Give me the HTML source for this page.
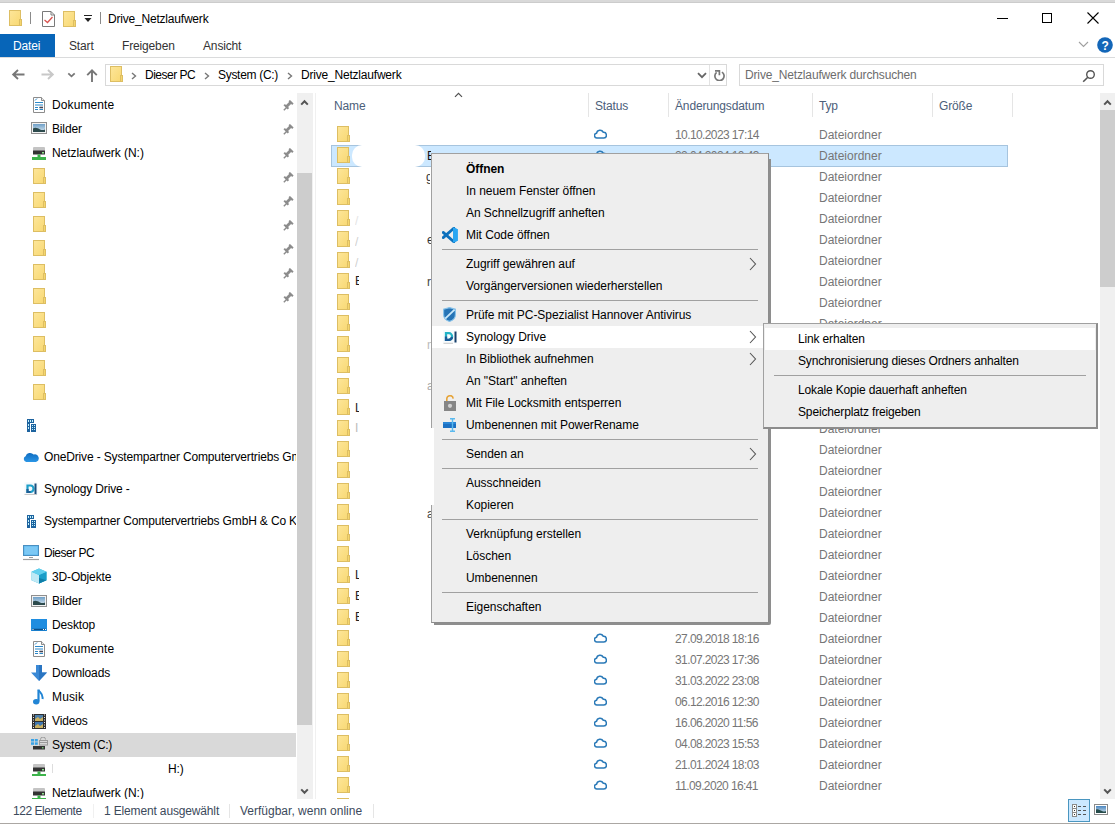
<!DOCTYPE html>
<html><head><meta charset="utf-8"><style>
*{margin:0;padding:0;box-sizing:border-box}
html,body{width:1115px;height:824px;overflow:hidden;background:#fff}
body{position:relative;font-family:"Liberation Sans",sans-serif;font-size:12px;color:#000;letter-spacing:-0.15px}
.a{position:absolute}
.t{position:absolute;white-space:nowrap;line-height:20px}
.d{position:absolute;left:675px;color:#767676;letter-spacing:-0.6px;line-height:21px;white-space:nowrap}
.ty{position:absolute;left:819px;color:#767676;letter-spacing:0;line-height:21px;white-space:nowrap}
.nv{position:absolute;line-height:24px;white-space:nowrap;color:#000}
.mi{position:absolute;left:466px;line-height:22px;white-space:nowrap;color:#000;letter-spacing:-0.05px}
.sep{position:absolute;height:1px;background:#a0a0a0}
</style></head><body>
<svg width="0" height="0" style="position:absolute"><defs><linearGradient id="fg" x1="0" y1="0" x2="1" y2="1"><stop offset="0" stop-color="#FDE69A"/><stop offset="1" stop-color="#F8D872"/></linearGradient></defs></svg>

<div class="a" style="left:0;top:0;width:1115px;height:3px;background:#d9d9d9;border-bottom:1px solid #cccccc"></div>
<svg class="a" style="left:9px;top:10px" width="13" height="16" viewBox="0 0 13 16"><rect x="0.5" y="0.5" width="11" height="15" fill="url(#fg)" stroke="#DDBE63"/><rect x="10.5" y="9.5" width="2" height="6" fill="#F5D66E" stroke="#DDBE63"/></svg>
<div class="a" style="left:30px;top:12px;width:1px;height:12px;background:#8a8a8a"></div>
<svg class="a" style="left:42px;top:11px" width="13" height="16" viewBox="0 0 13 16"><path d="M0.5 0.5H9L12.5 4V15.5H0.5Z" fill="#fff" stroke="#7a7a7a"/><path d="M9 0.5V4H12.5" fill="none" stroke="#7a7a7a"/><path d="M2.5 9L5.5 11.5L10.5 6" fill="none" stroke="#d9534f" stroke-width="1.3"/></svg>
<svg class="a" style="left:63px;top:11px" width="13" height="16" viewBox="0 0 13 16"><rect x="0.5" y="0.5" width="11" height="15" fill="url(#fg)" stroke="#DDBE63"/><rect x="10.5" y="9.5" width="2" height="6" fill="#F5D66E" stroke="#DDBE63"/></svg>
<svg class="a" style="left:83px;top:14px" width="10" height="10" viewBox="0 0 10 10"><rect x="1" y="1" width="8" height="1" fill="#222"/><path d="M1.5 4H8.5L5 8Z" fill="#222"/></svg>
<div class="a" style="left:100px;top:12px;width:1px;height:12px;background:#8a8a8a"></div>
<div class="t" style="left:108px;top:9px;letter-spacing:-0.2px">Drive_Netzlaufwerk</div>
<div class="a" style="left:997px;top:18px;width:11px;height:1px;background:#000"></div>
<div class="a" style="left:1042px;top:13px;width:10px;height:10px;border:1px solid #000"></div>
<svg class="a" style="left:1087px;top:12px" width="12" height="12" viewBox="0 0 12 12"><path d="M0.5 0.5L11.5 11.5M11.5 0.5L0.5 11.5" stroke="#000" stroke-width="1.1"/></svg>
<div class="a" style="left:0;top:34px;width:55px;height:23px;background:#0765b8"></div>
<div class="t" style="left:13px;top:36px;color:#fff">Datei</div>
<div class="t" style="left:69px;top:36px;color:#333">Start</div>
<div class="t" style="left:122px;top:36px;color:#333">Freigeben</div>
<div class="t" style="left:203px;top:36px;color:#333">Ansicht</div>
<div class="a" style="left:0;top:57px;width:1115px;height:1px;background:#dadbdc"></div>
<svg class="a" style="left:1078px;top:41px" width="11" height="7" viewBox="0 0 11 7"><path d="M1 1L5.5 5.5L10 1" fill="none" stroke="#a0a0a0" stroke-width="1.1"/></svg>
<svg class="a" style="left:1097px;top:37px" width="16" height="16" viewBox="0 0 16 16"><circle cx="8" cy="8" r="7.8" fill="#1366b8"/><text x="8" y="12.5" font-family="Liberation Sans" font-weight="bold" font-size="12" fill="#fff" text-anchor="middle">?</text></svg>
<svg class="a" style="left:11px;top:69px" width="14" height="12" viewBox="0 0 14 12"><path d="M13.5 5.5H2.5M7 1L2.2 5.5L7 10" fill="none" stroke="#777" stroke-width="1.9"/></svg>
<svg class="a" style="left:41px;top:69px" width="14" height="12" viewBox="0 0 14 12"><path d="M0.5 5.5H11.5M7 1L11.8 5.5L7 10" fill="none" stroke="#c8c8c8" stroke-width="1.9"/></svg>
<svg class="a" style="left:67px;top:72px" width="9" height="6" viewBox="0 0 9 6"><path d="M1.3 1.3L4.5 4.3L7.7 1.3" fill="none" stroke="#777" stroke-width="1.8"/></svg>
<svg class="a" style="left:86px;top:69px" width="12" height="13" viewBox="0 0 12 13"><path d="M6 13V1.5M1.2 6.2L6 1.4L10.8 6.2" fill="none" stroke="#777" stroke-width="1.9"/></svg>
<div class="a" style="left:105px;top:64px;width:622px;height:22px;border:1px solid #d9d9d9"></div>
<div class="a" style="left:709px;top:65px;width:1px;height:20px;background:#e3e3e3"></div>
<svg class="a" style="left:110px;top:66px" width="13" height="16" viewBox="0 0 13 16"><rect x="0.5" y="0.5" width="11" height="15" fill="url(#fg)" stroke="#DDBE63"/><rect x="10.5" y="9.5" width="2" height="6" fill="#F5D66E" stroke="#DDBE63"/></svg>
<svg class="a" style="left:131px;top:72px" width="6" height="8" viewBox="0 0 6 8"><path d="M1 1L4.5 4.0L1 7" fill="none" stroke="#777" stroke-width="1.4"/></svg>
<svg class="a" style="left:204px;top:72px" width="6" height="8" viewBox="0 0 6 8"><path d="M1 1L4.5 4.0L1 7" fill="none" stroke="#777" stroke-width="1.4"/></svg>
<svg class="a" style="left:287px;top:72px" width="6" height="8" viewBox="0 0 6 8"><path d="M1 1L4.5 4.0L1 7" fill="none" stroke="#777" stroke-width="1.4"/></svg>
<div class="t" style="left:145px;top:65px;letter-spacing:-0.5px">Dieser PC</div>
<div class="t" style="left:218px;top:65px;letter-spacing:-0.3px">System (C:)</div>
<div class="t" style="left:301px;top:65px;letter-spacing:-0.2px">Drive_Netzlaufwerk</div>
<svg class="a" style="left:697px;top:72px" width="10" height="7" viewBox="0 0 10 7"><path d="M1 1.2L5 5.2L9 1.2" fill="none" stroke="#666" stroke-width="1.8"/></svg>
<svg class="a" style="left:713px;top:69px" width="12" height="12" viewBox="0 0 12 12"><path d="M8.9 3.1A4.6 4.6 0 1 1 3.6 3.4" fill="none" stroke="#777" stroke-width="1.7"/><path d="M2 1.9H6.4V6.2" fill="none" stroke="#777" stroke-width="1.7"/></svg>
<div class="a" style="left:739px;top:64px;width:365px;height:22px;border:1px solid #d9d9d9"></div>
<div class="t" style="left:745px;top:65px;color:#6d6d6d">Drive_Netzlaufwerk durchsuchen</div>
<svg class="a" style="left:1082px;top:69px" width="14" height="14" viewBox="0 0 14 14"><circle cx="8.5" cy="5.5" r="3.8" fill="none" stroke="#555" stroke-width="1.4"/><path d="M5.8 8.2L1.2 12.8" stroke="#555" stroke-width="1.6"/></svg>
<div class="a" style="left:0;top:733px;width:296px;height:24px;background:#d9d9d9"></div>
<svg class="a" style="left:33px;top:97px" width="12" height="16" viewBox="0 0 12 16"><path d="M0.5 0.5H8.5L11.5 3.5V15.5H0.5Z" fill="#fff" stroke="#8c8c8c"/><path d="M8.5 0.5V3.5H11.5" fill="#e8e8e8" stroke="#8c8c8c"/><path d="M2 3.5L4 1.5M2 5.5H10M2 8H10M2 10.5H5M6.5 10.5H10M2 12.5H5M6.5 12.5H10" stroke="#2b88c8" stroke-width="1"/><path d="M6.5 10.5H10" stroke="#445" stroke-width="1.6"/></svg>
<div class="nv" style="left:52px;top:93px;letter-spacing:0.1px">Dokumente</div>
<svg class="a" style="left:31px;top:122px" width="16" height="12" viewBox="0 0 16 12"><rect x="0.5" y="0.5" width="15" height="11" fill="#f2f2f2" stroke="#8f8f8f"/><defs><linearGradient id="sky" x1="0" y1="0" x2="0" y2="1"><stop offset="0" stop-color="#6fa0c8"/><stop offset="1" stop-color="#d8e6ef"/></linearGradient></defs><rect x="2" y="2" width="12" height="8" fill="url(#sky)"/><path d="M2 6.5C4 5 7 6 9 7.5C11 8.5 13 8 14 7.5V10H2Z" fill="#2c4a4c"/></svg>
<div class="nv" style="left:52px;top:117px">Bilder</div>
<svg class="a" style="left:32px;top:147px" width="14" height="13" viewBox="0 0 14 13"><rect x="1" y="0" width="12" height="4" rx="1" fill="#c4c4c4"/><rect x="1" y="3.5" width="12" height="4" fill="#333"/><rect x="10" y="5" width="2" height="1.5" fill="#8de08d"/><rect x="5.5" y="7.5" width="3" height="2.5" fill="#3cb34a"/><rect x="0" y="10" width="14" height="3" fill="#3cb34a"/></svg>
<div class="nv" style="left:52px;top:141px;letter-spacing:-0.05px">Netzlaufwerk (N:)</div>
<svg class="a" style="left:283px;top:100px" width="11" height="11" viewBox="0 0 11 11"><path d="M0.8 10.2L3.6 7.4" stroke="#8c8c8c" stroke-width="1.4"/><path d="M1.2 4.6L5.4 8.8" stroke="#8c8c8c" stroke-width="2"/><path d="M3.3 6.7L7.8 2.2" stroke="#8c8c8c" stroke-width="2.8"/><path d="M6.2 0.6L9.9 4.3" stroke="#8c8c8c" stroke-width="2"/></svg>
<svg class="a" style="left:283px;top:124px" width="11" height="11" viewBox="0 0 11 11"><path d="M0.8 10.2L3.6 7.4" stroke="#8c8c8c" stroke-width="1.4"/><path d="M1.2 4.6L5.4 8.8" stroke="#8c8c8c" stroke-width="2"/><path d="M3.3 6.7L7.8 2.2" stroke="#8c8c8c" stroke-width="2.8"/><path d="M6.2 0.6L9.9 4.3" stroke="#8c8c8c" stroke-width="2"/></svg>
<svg class="a" style="left:283px;top:148px" width="11" height="11" viewBox="0 0 11 11"><path d="M0.8 10.2L3.6 7.4" stroke="#8c8c8c" stroke-width="1.4"/><path d="M1.2 4.6L5.4 8.8" stroke="#8c8c8c" stroke-width="2"/><path d="M3.3 6.7L7.8 2.2" stroke="#8c8c8c" stroke-width="2.8"/><path d="M6.2 0.6L9.9 4.3" stroke="#8c8c8c" stroke-width="2"/></svg>
<svg class="a" style="left:283px;top:172px" width="11" height="11" viewBox="0 0 11 11"><path d="M0.8 10.2L3.6 7.4" stroke="#8c8c8c" stroke-width="1.4"/><path d="M1.2 4.6L5.4 8.8" stroke="#8c8c8c" stroke-width="2"/><path d="M3.3 6.7L7.8 2.2" stroke="#8c8c8c" stroke-width="2.8"/><path d="M6.2 0.6L9.9 4.3" stroke="#8c8c8c" stroke-width="2"/></svg>
<svg class="a" style="left:283px;top:196px" width="11" height="11" viewBox="0 0 11 11"><path d="M0.8 10.2L3.6 7.4" stroke="#8c8c8c" stroke-width="1.4"/><path d="M1.2 4.6L5.4 8.8" stroke="#8c8c8c" stroke-width="2"/><path d="M3.3 6.7L7.8 2.2" stroke="#8c8c8c" stroke-width="2.8"/><path d="M6.2 0.6L9.9 4.3" stroke="#8c8c8c" stroke-width="2"/></svg>
<svg class="a" style="left:283px;top:220px" width="11" height="11" viewBox="0 0 11 11"><path d="M0.8 10.2L3.6 7.4" stroke="#8c8c8c" stroke-width="1.4"/><path d="M1.2 4.6L5.4 8.8" stroke="#8c8c8c" stroke-width="2"/><path d="M3.3 6.7L7.8 2.2" stroke="#8c8c8c" stroke-width="2.8"/><path d="M6.2 0.6L9.9 4.3" stroke="#8c8c8c" stroke-width="2"/></svg>
<svg class="a" style="left:283px;top:244px" width="11" height="11" viewBox="0 0 11 11"><path d="M0.8 10.2L3.6 7.4" stroke="#8c8c8c" stroke-width="1.4"/><path d="M1.2 4.6L5.4 8.8" stroke="#8c8c8c" stroke-width="2"/><path d="M3.3 6.7L7.8 2.2" stroke="#8c8c8c" stroke-width="2.8"/><path d="M6.2 0.6L9.9 4.3" stroke="#8c8c8c" stroke-width="2"/></svg>
<svg class="a" style="left:283px;top:268px" width="11" height="11" viewBox="0 0 11 11"><path d="M0.8 10.2L3.6 7.4" stroke="#8c8c8c" stroke-width="1.4"/><path d="M1.2 4.6L5.4 8.8" stroke="#8c8c8c" stroke-width="2"/><path d="M3.3 6.7L7.8 2.2" stroke="#8c8c8c" stroke-width="2.8"/><path d="M6.2 0.6L9.9 4.3" stroke="#8c8c8c" stroke-width="2"/></svg>
<svg class="a" style="left:283px;top:292px" width="11" height="11" viewBox="0 0 11 11"><path d="M0.8 10.2L3.6 7.4" stroke="#8c8c8c" stroke-width="1.4"/><path d="M1.2 4.6L5.4 8.8" stroke="#8c8c8c" stroke-width="2"/><path d="M3.3 6.7L7.8 2.2" stroke="#8c8c8c" stroke-width="2.8"/><path d="M6.2 0.6L9.9 4.3" stroke="#8c8c8c" stroke-width="2"/></svg>
<svg class="a" style="left:33px;top:168px" width="13" height="16" viewBox="0 0 13 16"><rect x="0.5" y="0.5" width="11" height="15" fill="url(#fg)" stroke="#DDBE63"/><rect x="10.5" y="9.5" width="2" height="6" fill="#F5D66E" stroke="#DDBE63"/></svg>
<svg class="a" style="left:33px;top:192px" width="13" height="16" viewBox="0 0 13 16"><rect x="0.5" y="0.5" width="11" height="15" fill="url(#fg)" stroke="#DDBE63"/><rect x="10.5" y="9.5" width="2" height="6" fill="#F5D66E" stroke="#DDBE63"/></svg>
<svg class="a" style="left:33px;top:216px" width="13" height="16" viewBox="0 0 13 16"><rect x="0.5" y="0.5" width="11" height="15" fill="url(#fg)" stroke="#DDBE63"/><rect x="10.5" y="9.5" width="2" height="6" fill="#F5D66E" stroke="#DDBE63"/></svg>
<svg class="a" style="left:33px;top:240px" width="13" height="16" viewBox="0 0 13 16"><rect x="0.5" y="0.5" width="11" height="15" fill="url(#fg)" stroke="#DDBE63"/><rect x="10.5" y="9.5" width="2" height="6" fill="#F5D66E" stroke="#DDBE63"/></svg>
<svg class="a" style="left:33px;top:264px" width="13" height="16" viewBox="0 0 13 16"><rect x="0.5" y="0.5" width="11" height="15" fill="url(#fg)" stroke="#DDBE63"/><rect x="10.5" y="9.5" width="2" height="6" fill="#F5D66E" stroke="#DDBE63"/></svg>
<svg class="a" style="left:33px;top:288px" width="13" height="16" viewBox="0 0 13 16"><rect x="0.5" y="0.5" width="11" height="15" fill="url(#fg)" stroke="#DDBE63"/><rect x="10.5" y="9.5" width="2" height="6" fill="#F5D66E" stroke="#DDBE63"/></svg>
<svg class="a" style="left:33px;top:312px" width="13" height="16" viewBox="0 0 13 16"><rect x="0.5" y="0.5" width="11" height="15" fill="url(#fg)" stroke="#DDBE63"/><rect x="10.5" y="9.5" width="2" height="6" fill="#F5D66E" stroke="#DDBE63"/></svg>
<svg class="a" style="left:33px;top:336px" width="13" height="16" viewBox="0 0 13 16"><rect x="0.5" y="0.5" width="11" height="15" fill="url(#fg)" stroke="#DDBE63"/><rect x="10.5" y="9.5" width="2" height="6" fill="#F5D66E" stroke="#DDBE63"/></svg>
<svg class="a" style="left:33px;top:360px" width="13" height="16" viewBox="0 0 13 16"><rect x="0.5" y="0.5" width="11" height="15" fill="url(#fg)" stroke="#DDBE63"/><rect x="10.5" y="9.5" width="2" height="6" fill="#F5D66E" stroke="#DDBE63"/></svg>
<svg class="a" style="left:33px;top:384px" width="13" height="16" viewBox="0 0 13 16"><rect x="0.5" y="0.5" width="11" height="15" fill="url(#fg)" stroke="#DDBE63"/><rect x="10.5" y="9.5" width="2" height="6" fill="#F5D66E" stroke="#DDBE63"/></svg>
<svg class="a" style="left:27px;top:419px" width="10" height="13" viewBox="0 0 10 13"><path d="M0 0H7V4H3V13H0Z" fill="#1d639f"/><rect x="4" y="5" width="5" height="8" fill="#1d639f"/><g fill="#c4f1fb"><rect x="1" y="1" width="1" height="2"/><rect x="3" y="1" width="1" height="2"/><rect x="5" y="1" width="1" height="2"/><rect x="1" y="5" width="1" height="2"/><rect x="1" y="8" width="1" height="2"/><rect x="5" y="6" width="1" height="1"/><rect x="7" y="6" width="1" height="1"/><rect x="5" y="8" width="1" height="1"/><rect x="7" y="8" width="1" height="1"/><rect x="5" y="10" width="1" height="1"/><rect x="7" y="10" width="1" height="1"/></g></svg>
<svg class="a" style="left:23px;top:452px" width="16" height="10" viewBox="0 0 16 10"><defs><linearGradient id="od" x1="0" y1="0" x2="0" y2="1"><stop offset="0" stop-color="#0f6cc0"/><stop offset="1" stop-color="#2b96e6"/></linearGradient></defs><path d="M3.2 10A3 3 0 0 1 2.6 4.3A4.6 4.6 0 0 1 10.6 2.6A3.6 3.6 0 0 1 13 10Z" fill="url(#od)"/></svg>
<div class="nv" style="left:44px;top:445px;width:252px;overflow:hidden">OneDrive - Systempartner Computervertriebs GmbH &amp; Co KG</div>
<svg class="a" style="left:24px;top:482px" width="14" height="14" viewBox="0 0 14 14"><rect x="0.5" y="0.5" width="13" height="12.5" fill="#f4f8fb"/><path d="M0.5 12.5H13" stroke="#c8c8c8"/><path d="M3.5 3.5H6.5A3 3.2 0 0 1 6.5 10H3.5Z" fill="none" stroke="#1e9fc9" stroke-width="2.2"/><path d="M3.5 7V10H6.5" fill="none" stroke="#1d5f96" stroke-width="2.2"/><path d="M11.5 1.5V12" stroke="#1b4f7d" stroke-width="2"/></svg>
<div class="nv" style="left:44px;top:477px">Synology Drive -</div>
<svg class="a" style="left:27px;top:515px" width="10" height="13" viewBox="0 0 10 13"><path d="M0 0H7V4H3V13H0Z" fill="#1d639f"/><rect x="4" y="5" width="5" height="8" fill="#1d639f"/><g fill="#c4f1fb"><rect x="1" y="1" width="1" height="2"/><rect x="3" y="1" width="1" height="2"/><rect x="5" y="1" width="1" height="2"/><rect x="1" y="5" width="1" height="2"/><rect x="1" y="8" width="1" height="2"/><rect x="5" y="6" width="1" height="1"/><rect x="7" y="6" width="1" height="1"/><rect x="5" y="8" width="1" height="1"/><rect x="7" y="8" width="1" height="1"/><rect x="5" y="10" width="1" height="1"/><rect x="7" y="10" width="1" height="1"/></g></svg>
<div class="nv" style="left:44px;top:509px;width:252px;overflow:hidden">Systempartner Computervertriebs GmbH &amp; Co KG</div>
<svg class="a" style="left:23px;top:545px" width="16" height="16" viewBox="0 0 16 16"><rect x="0.5" y="0.5" width="15" height="10" fill="#5ab8f0" stroke="#4a8fc0"/><rect x="1.5" y="1.5" width="13" height="8" fill="#7cc8f4"/><path d="M6 12.5H10" stroke="#9a9a9a" stroke-width="1"/><path d="M0 14.5H16" stroke="#a0a0a0" stroke-width="1.2"/></svg>
<div class="nv" style="left:44px;top:541px;letter-spacing:-0.5px">Dieser PC</div>
<svg class="a" style="left:31px;top:568px" width="16" height="16" viewBox="0 0 16 16"><path d="M8 0.5L15.5 3.8V12.2L8 15.5L0.5 12.2V3.8Z" fill="#3cbde0"/><path d="M0.5 3.8L8 7V15.5L0.5 12.2Z" fill="#bfe9f5"/><path d="M8 7L15.5 3.8V12.2L8 15.5Z" fill="#1a9dc8"/><path d="M0.5 3.8L8 0.5L15.5 3.8L8 7Z" fill="#63d0ee"/><path d="M8 10L15.5 12.2L8 15.5Z" fill="#0f7ea8"/></svg>
<div class="nv" style="left:52px;top:565px">3D-Objekte</div>
<svg class="a" style="left:31px;top:595px" width="16" height="12" viewBox="0 0 16 12"><rect x="0.5" y="0.5" width="15" height="11" fill="#f2f2f2" stroke="#8f8f8f"/><defs><linearGradient id="sky" x1="0" y1="0" x2="0" y2="1"><stop offset="0" stop-color="#6fa0c8"/><stop offset="1" stop-color="#d8e6ef"/></linearGradient></defs><rect x="2" y="2" width="12" height="8" fill="url(#sky)"/><path d="M2 6.5C4 5 7 6 9 7.5C11 8.5 13 8 14 7.5V10H2Z" fill="#2c4a4c"/></svg>
<div class="nv" style="left:52px;top:589px">Bilder</div>
<svg class="a" style="left:31px;top:619px" width="16" height="12" viewBox="0 0 16 12"><rect x="0" y="0" width="16" height="12" fill="#1f8de0"/><path d="M1 10.5H15" stroke="#0b4f8a" stroke-width="1.5"/><rect x="1.5" y="10" width="1" height="1" fill="#fff"/><rect x="12" y="10" width="1" height="1" fill="#fff"/><rect x="14" y="10" width="1" height="1" fill="#fff"/></svg>
<div class="nv" style="left:52px;top:613px">Desktop</div>
<svg class="a" style="left:33px;top:641px" width="12" height="16" viewBox="0 0 12 16"><path d="M0.5 0.5H8.5L11.5 3.5V15.5H0.5Z" fill="#fff" stroke="#8c8c8c"/><path d="M8.5 0.5V3.5H11.5" fill="#e8e8e8" stroke="#8c8c8c"/><path d="M2 3.5L4 1.5M2 5.5H10M2 8H10M2 10.5H5M6.5 10.5H10M2 12.5H5M6.5 12.5H10" stroke="#2b88c8" stroke-width="1"/><path d="M6.5 10.5H10" stroke="#445" stroke-width="1.6"/></svg>
<div class="nv" style="left:52px;top:637px;letter-spacing:0.1px">Dokumente</div>
<svg class="a" style="left:31px;top:665px" width="16" height="16" viewBox="0 0 16 16"><path d="M5 0H11V7.5H16L8 16L0 7.5H5Z" fill="#3a89d6"/><path d="M8 0H11V7.5H16L8 16Z" fill="#2a75c2"/></svg>
<div class="nv" style="left:52px;top:661px">Downloads</div>
<svg class="a" style="left:33px;top:689px" width="11" height="16" viewBox="0 0 11 16"><path d="M5.5 0.5V12.5" stroke="#2185d5" stroke-width="2.2"/><ellipse cx="3.2" cy="12.8" rx="3.2" ry="2.7" fill="#2185d5"/><path d="M5.5 1C6.5 3.5 10.5 4.5 9.5 10" fill="none" stroke="#2185d5" stroke-width="2"/></svg>
<div class="nv" style="left:52px;top:685px;letter-spacing:0.15px">Musik</div>
<svg class="a" style="left:32px;top:714px" width="14" height="15" viewBox="0 0 14 15"><rect x="0" y="0" width="14" height="15" fill="#2e2e2e"/><rect x="3" y="1" width="8" height="6" fill="#4f7fa8"/><rect x="3" y="8" width="8" height="6" fill="#3f77b0"/><path d="M3 5L6 3L8 5L11 3V7H3Z" fill="#c9b060"/><path d="M3 12L6 10L8 12L11 10V14H3Z" fill="#c9b060"/><path d="M1.5 0.5V15M12.5 0.5V15" stroke="#e8e8e8" stroke-width="1" stroke-dasharray="1 1.5"/></svg>
<div class="nv" style="left:52px;top:709px">Videos</div>
<svg class="a" style="left:31px;top:737px" width="17" height="13" viewBox="0 0 17 13"><rect x="0" y="2" width="3" height="2.5" fill="#3aa3e6"/><rect x="3.8" y="2" width="3" height="2.5" fill="#3aa3e6"/><rect x="0" y="5.3" width="3" height="2.5" fill="#3aa3e6"/><rect x="3.8" y="5.3" width="3" height="2.5" fill="#3aa3e6"/><path d="M9.5 3.5V2.5A2.5 2.5 0 0 1 14.5 2.5" fill="none" stroke="#9a9a9a"/><rect x="8.5" y="3.5" width="8" height="4.5" fill="none" stroke="#9a9a9a"/><path d="M8.5 5.5H16.5" stroke="#9a9a9a"/><rect x="2" y="9" width="12" height="3.5" fill="#333"/><rect x="11" y="10.2" width="1.5" height="1.2" fill="#7ddc7d"/></svg>
<div class="nv" style="left:52px;top:733px;letter-spacing:-0.3px">System (C:)</div>
<svg class="a" style="left:32px;top:764px" width="14" height="13" viewBox="0 0 14 13"><rect x="1" y="0" width="12" height="4" rx="1" fill="#c4c4c4"/><rect x="1" y="3.5" width="12" height="4" fill="#333"/><rect x="10" y="5" width="2" height="1.5" fill="#8de08d"/><rect x="5.5" y="7.5" width="3" height="3" fill="#3cb34a"/><rect x="0" y="10" width="14" height="2" fill="#3cb34a"/></svg>
<div class="nv" style="left:168px;top:757px">H:)</div>
<div class="a" style="left:52px;top:764px;width:1px;height:9px;background:#ddd"></div>
<svg class="a" style="left:32px;top:788px" width="14" height="12" viewBox="0 0 14 12"><rect x="1" y="0" width="12" height="4" rx="1" fill="#c4c4c4"/><rect x="1" y="3.5" width="12" height="4" fill="#333"/><rect x="10" y="5" width="2" height="1.5" fill="#8de08d"/><rect x="5.5" y="7.5" width="3" height="3" fill="#3cb34a"/><rect x="0" y="10" width="14" height="2" fill="#3cb34a"/></svg>
<div class="nv" style="left:52px;top:781px;letter-spacing:-0.05px">Netzlaufwerk (N:)</div>
<div class="a" style="left:297px;top:93px;width:16px;height:706px;background:#f0f0f0"></div>
<div class="a" style="left:297px;top:173px;width:15px;height:552px;background:#cdcdcd"></div>
<svg class="a" style="left:300px;top:99px" width="9" height="7" viewBox="0 0 9 7"><path d="M1.2 5.6L4.5 2.2L7.8 5.6" fill="none" stroke="#555" stroke-width="2"/></svg>
<svg class="a" style="left:300px;top:788px" width="9" height="7" viewBox="0 0 9 7"><path d="M1.2 1.4L4.5 4.8L7.8 1.4" fill="none" stroke="#555" stroke-width="2"/></svg>
<div class="a" style="left:315px;top:93px;width:1px;height:706px;background:#f0f0f0"></div>
<div class="t" style="left:334px;top:96px;color:#4c607a">Name</div>
<svg class="a" style="left:454px;top:92px" width="9" height="6" viewBox="0 0 9 6"><path d="M1 4.8L4.5 1.3L8 4.8" fill="none" stroke="#505050" stroke-width="1.2"/></svg>
<div class="t" style="left:595px;top:96px;color:#4c607a">Status</div>
<div class="t" style="left:675px;top:96px;color:#4c607a">Änderungsdatum</div>
<div class="t" style="left:819px;top:96px;color:#4c607a">Typ</div>
<div class="t" style="left:939px;top:96px;color:#4c607a">Größe</div>
<div class="a" style="left:588px;top:93px;width:1px;height:24px;background:#e5e5e5"></div>
<div class="a" style="left:668px;top:93px;width:1px;height:24px;background:#e5e5e5"></div>
<div class="a" style="left:812px;top:93px;width:1px;height:24px;background:#e5e5e5"></div>
<div class="a" style="left:932px;top:93px;width:1px;height:24px;background:#e5e5e5"></div>
<div class="a" style="left:1012px;top:93px;width:1px;height:24px;background:#e5e5e5"></div>
<div class="a" style="left:331px;top:145px;width:677px;height:22px;background:#cce8ff;border:1px solid #a6c4de"></div>
<svg class="a" style="left:337px;top:798px" width="13" height="16" viewBox="0 0 13 16"><rect x="0.5" y="0.5" width="11" height="15" fill="url(#fg)" stroke="#DDBE63"/><rect x="10.5" y="9.5" width="2" height="6" fill="#F5D66E" stroke="#DDBE63"/></svg>
<svg class="a" style="left:337px;top:126px" width="13" height="16" viewBox="0 0 13 16"><rect x="0.5" y="0.5" width="11" height="15" fill="url(#fg)" stroke="#DDBE63"/><rect x="10.5" y="9.5" width="2" height="6" fill="#F5D66E" stroke="#DDBE63"/></svg>
<svg class="a" style="left:594px;top:129px" width="13" height="10" viewBox="0 0 13 10"><path d="M3.2 9A2.4 2.4 0 0 1 2.6 4.2A3.5 3.5 0 0 1 9.2 3.2A2.8 2.8 0 0 1 9.8 9Z" fill="none" stroke="#2b7ab8" stroke-width="1.5"/></svg>
<div class="d" style="top:125px">10.10.2023 17:14</div>
<div class="ty" style="top:125px">Dateiordner</div>
<svg class="a" style="left:337px;top:147px" width="13" height="16" viewBox="0 0 13 16"><rect x="0.5" y="0.5" width="11" height="15" fill="url(#fg)" stroke="#DDBE63"/><rect x="10.5" y="9.5" width="2" height="6" fill="#F5D66E" stroke="#DDBE63"/></svg>
<svg class="a" style="left:594px;top:150px" width="13" height="10" viewBox="0 0 13 10"><path d="M3.2 9A2.4 2.4 0 0 1 2.6 4.2A3.5 3.5 0 0 1 9.2 3.2A2.8 2.8 0 0 1 9.8 9Z" fill="none" stroke="#2b7ab8" stroke-width="1.5"/></svg>
<div class="d" style="top:146px">22.04.2024 10:43</div>
<div class="ty" style="top:146px">Dateiordner</div>
<svg class="a" style="left:337px;top:168px" width="13" height="16" viewBox="0 0 13 16"><rect x="0.5" y="0.5" width="11" height="15" fill="url(#fg)" stroke="#DDBE63"/><rect x="10.5" y="9.5" width="2" height="6" fill="#F5D66E" stroke="#DDBE63"/></svg>
<svg class="a" style="left:594px;top:171px" width="13" height="10" viewBox="0 0 13 10"><path d="M3.2 9A2.4 2.4 0 0 1 2.6 4.2A3.5 3.5 0 0 1 9.2 3.2A2.8 2.8 0 0 1 9.8 9Z" fill="none" stroke="#2b7ab8" stroke-width="1.5"/></svg>
<div class="ty" style="top:167px">Dateiordner</div>
<svg class="a" style="left:337px;top:189px" width="13" height="16" viewBox="0 0 13 16"><rect x="0.5" y="0.5" width="11" height="15" fill="url(#fg)" stroke="#DDBE63"/><rect x="10.5" y="9.5" width="2" height="6" fill="#F5D66E" stroke="#DDBE63"/></svg>
<svg class="a" style="left:594px;top:192px" width="13" height="10" viewBox="0 0 13 10"><path d="M3.2 9A2.4 2.4 0 0 1 2.6 4.2A3.5 3.5 0 0 1 9.2 3.2A2.8 2.8 0 0 1 9.8 9Z" fill="none" stroke="#2b7ab8" stroke-width="1.5"/></svg>
<div class="ty" style="top:188px">Dateiordner</div>
<svg class="a" style="left:337px;top:210px" width="13" height="16" viewBox="0 0 13 16"><rect x="0.5" y="0.5" width="11" height="15" fill="url(#fg)" stroke="#DDBE63"/><rect x="10.5" y="9.5" width="2" height="6" fill="#F5D66E" stroke="#DDBE63"/></svg>
<svg class="a" style="left:594px;top:213px" width="13" height="10" viewBox="0 0 13 10"><path d="M3.2 9A2.4 2.4 0 0 1 2.6 4.2A3.5 3.5 0 0 1 9.2 3.2A2.8 2.8 0 0 1 9.8 9Z" fill="none" stroke="#2b7ab8" stroke-width="1.5"/></svg>
<div class="ty" style="top:209px">Dateiordner</div>
<svg class="a" style="left:337px;top:231px" width="13" height="16" viewBox="0 0 13 16"><rect x="0.5" y="0.5" width="11" height="15" fill="url(#fg)" stroke="#DDBE63"/><rect x="10.5" y="9.5" width="2" height="6" fill="#F5D66E" stroke="#DDBE63"/></svg>
<svg class="a" style="left:594px;top:234px" width="13" height="10" viewBox="0 0 13 10"><path d="M3.2 9A2.4 2.4 0 0 1 2.6 4.2A3.5 3.5 0 0 1 9.2 3.2A2.8 2.8 0 0 1 9.8 9Z" fill="none" stroke="#2b7ab8" stroke-width="1.5"/></svg>
<div class="ty" style="top:230px">Dateiordner</div>
<svg class="a" style="left:337px;top:252px" width="13" height="16" viewBox="0 0 13 16"><rect x="0.5" y="0.5" width="11" height="15" fill="url(#fg)" stroke="#DDBE63"/><rect x="10.5" y="9.5" width="2" height="6" fill="#F5D66E" stroke="#DDBE63"/></svg>
<svg class="a" style="left:594px;top:255px" width="13" height="10" viewBox="0 0 13 10"><path d="M3.2 9A2.4 2.4 0 0 1 2.6 4.2A3.5 3.5 0 0 1 9.2 3.2A2.8 2.8 0 0 1 9.8 9Z" fill="none" stroke="#2b7ab8" stroke-width="1.5"/></svg>
<div class="ty" style="top:251px">Dateiordner</div>
<svg class="a" style="left:337px;top:273px" width="13" height="16" viewBox="0 0 13 16"><rect x="0.5" y="0.5" width="11" height="15" fill="url(#fg)" stroke="#DDBE63"/><rect x="10.5" y="9.5" width="2" height="6" fill="#F5D66E" stroke="#DDBE63"/></svg>
<svg class="a" style="left:594px;top:276px" width="13" height="10" viewBox="0 0 13 10"><path d="M3.2 9A2.4 2.4 0 0 1 2.6 4.2A3.5 3.5 0 0 1 9.2 3.2A2.8 2.8 0 0 1 9.8 9Z" fill="none" stroke="#2b7ab8" stroke-width="1.5"/></svg>
<div class="ty" style="top:272px">Dateiordner</div>
<svg class="a" style="left:337px;top:294px" width="13" height="16" viewBox="0 0 13 16"><rect x="0.5" y="0.5" width="11" height="15" fill="url(#fg)" stroke="#DDBE63"/><rect x="10.5" y="9.5" width="2" height="6" fill="#F5D66E" stroke="#DDBE63"/></svg>
<svg class="a" style="left:594px;top:297px" width="13" height="10" viewBox="0 0 13 10"><path d="M3.2 9A2.4 2.4 0 0 1 2.6 4.2A3.5 3.5 0 0 1 9.2 3.2A2.8 2.8 0 0 1 9.8 9Z" fill="none" stroke="#2b7ab8" stroke-width="1.5"/></svg>
<div class="ty" style="top:293px">Dateiordner</div>
<svg class="a" style="left:337px;top:315px" width="13" height="16" viewBox="0 0 13 16"><rect x="0.5" y="0.5" width="11" height="15" fill="url(#fg)" stroke="#DDBE63"/><rect x="10.5" y="9.5" width="2" height="6" fill="#F5D66E" stroke="#DDBE63"/></svg>
<svg class="a" style="left:594px;top:318px" width="13" height="10" viewBox="0 0 13 10"><path d="M3.2 9A2.4 2.4 0 0 1 2.6 4.2A3.5 3.5 0 0 1 9.2 3.2A2.8 2.8 0 0 1 9.8 9Z" fill="none" stroke="#2b7ab8" stroke-width="1.5"/></svg>
<div class="ty" style="top:314px">Dateiordner</div>
<svg class="a" style="left:337px;top:336px" width="13" height="16" viewBox="0 0 13 16"><rect x="0.5" y="0.5" width="11" height="15" fill="url(#fg)" stroke="#DDBE63"/><rect x="10.5" y="9.5" width="2" height="6" fill="#F5D66E" stroke="#DDBE63"/></svg>
<svg class="a" style="left:594px;top:339px" width="13" height="10" viewBox="0 0 13 10"><path d="M3.2 9A2.4 2.4 0 0 1 2.6 4.2A3.5 3.5 0 0 1 9.2 3.2A2.8 2.8 0 0 1 9.8 9Z" fill="none" stroke="#2b7ab8" stroke-width="1.5"/></svg>
<div class="ty" style="top:335px">Dateiordner</div>
<svg class="a" style="left:337px;top:357px" width="13" height="16" viewBox="0 0 13 16"><rect x="0.5" y="0.5" width="11" height="15" fill="url(#fg)" stroke="#DDBE63"/><rect x="10.5" y="9.5" width="2" height="6" fill="#F5D66E" stroke="#DDBE63"/></svg>
<svg class="a" style="left:594px;top:360px" width="13" height="10" viewBox="0 0 13 10"><path d="M3.2 9A2.4 2.4 0 0 1 2.6 4.2A3.5 3.5 0 0 1 9.2 3.2A2.8 2.8 0 0 1 9.8 9Z" fill="none" stroke="#2b7ab8" stroke-width="1.5"/></svg>
<div class="ty" style="top:356px">Dateiordner</div>
<svg class="a" style="left:337px;top:378px" width="13" height="16" viewBox="0 0 13 16"><rect x="0.5" y="0.5" width="11" height="15" fill="url(#fg)" stroke="#DDBE63"/><rect x="10.5" y="9.5" width="2" height="6" fill="#F5D66E" stroke="#DDBE63"/></svg>
<svg class="a" style="left:594px;top:381px" width="13" height="10" viewBox="0 0 13 10"><path d="M3.2 9A2.4 2.4 0 0 1 2.6 4.2A3.5 3.5 0 0 1 9.2 3.2A2.8 2.8 0 0 1 9.8 9Z" fill="none" stroke="#2b7ab8" stroke-width="1.5"/></svg>
<div class="ty" style="top:377px">Dateiordner</div>
<svg class="a" style="left:337px;top:399px" width="13" height="16" viewBox="0 0 13 16"><rect x="0.5" y="0.5" width="11" height="15" fill="url(#fg)" stroke="#DDBE63"/><rect x="10.5" y="9.5" width="2" height="6" fill="#F5D66E" stroke="#DDBE63"/></svg>
<svg class="a" style="left:594px;top:402px" width="13" height="10" viewBox="0 0 13 10"><path d="M3.2 9A2.4 2.4 0 0 1 2.6 4.2A3.5 3.5 0 0 1 9.2 3.2A2.8 2.8 0 0 1 9.8 9Z" fill="none" stroke="#2b7ab8" stroke-width="1.5"/></svg>
<div class="ty" style="top:398px">Dateiordner</div>
<svg class="a" style="left:337px;top:420px" width="13" height="16" viewBox="0 0 13 16"><rect x="0.5" y="0.5" width="11" height="15" fill="url(#fg)" stroke="#DDBE63"/><rect x="10.5" y="9.5" width="2" height="6" fill="#F5D66E" stroke="#DDBE63"/></svg>
<svg class="a" style="left:594px;top:423px" width="13" height="10" viewBox="0 0 13 10"><path d="M3.2 9A2.4 2.4 0 0 1 2.6 4.2A3.5 3.5 0 0 1 9.2 3.2A2.8 2.8 0 0 1 9.8 9Z" fill="none" stroke="#2b7ab8" stroke-width="1.5"/></svg>
<div class="ty" style="top:419px">Dateiordner</div>
<svg class="a" style="left:337px;top:441px" width="13" height="16" viewBox="0 0 13 16"><rect x="0.5" y="0.5" width="11" height="15" fill="url(#fg)" stroke="#DDBE63"/><rect x="10.5" y="9.5" width="2" height="6" fill="#F5D66E" stroke="#DDBE63"/></svg>
<svg class="a" style="left:594px;top:444px" width="13" height="10" viewBox="0 0 13 10"><path d="M3.2 9A2.4 2.4 0 0 1 2.6 4.2A3.5 3.5 0 0 1 9.2 3.2A2.8 2.8 0 0 1 9.8 9Z" fill="none" stroke="#2b7ab8" stroke-width="1.5"/></svg>
<div class="ty" style="top:440px">Dateiordner</div>
<svg class="a" style="left:337px;top:462px" width="13" height="16" viewBox="0 0 13 16"><rect x="0.5" y="0.5" width="11" height="15" fill="url(#fg)" stroke="#DDBE63"/><rect x="10.5" y="9.5" width="2" height="6" fill="#F5D66E" stroke="#DDBE63"/></svg>
<svg class="a" style="left:594px;top:465px" width="13" height="10" viewBox="0 0 13 10"><path d="M3.2 9A2.4 2.4 0 0 1 2.6 4.2A3.5 3.5 0 0 1 9.2 3.2A2.8 2.8 0 0 1 9.8 9Z" fill="none" stroke="#2b7ab8" stroke-width="1.5"/></svg>
<div class="ty" style="top:461px">Dateiordner</div>
<svg class="a" style="left:337px;top:483px" width="13" height="16" viewBox="0 0 13 16"><rect x="0.5" y="0.5" width="11" height="15" fill="url(#fg)" stroke="#DDBE63"/><rect x="10.5" y="9.5" width="2" height="6" fill="#F5D66E" stroke="#DDBE63"/></svg>
<svg class="a" style="left:594px;top:486px" width="13" height="10" viewBox="0 0 13 10"><path d="M3.2 9A2.4 2.4 0 0 1 2.6 4.2A3.5 3.5 0 0 1 9.2 3.2A2.8 2.8 0 0 1 9.8 9Z" fill="none" stroke="#2b7ab8" stroke-width="1.5"/></svg>
<div class="ty" style="top:482px">Dateiordner</div>
<svg class="a" style="left:337px;top:504px" width="13" height="16" viewBox="0 0 13 16"><rect x="0.5" y="0.5" width="11" height="15" fill="url(#fg)" stroke="#DDBE63"/><rect x="10.5" y="9.5" width="2" height="6" fill="#F5D66E" stroke="#DDBE63"/></svg>
<svg class="a" style="left:594px;top:507px" width="13" height="10" viewBox="0 0 13 10"><path d="M3.2 9A2.4 2.4 0 0 1 2.6 4.2A3.5 3.5 0 0 1 9.2 3.2A2.8 2.8 0 0 1 9.8 9Z" fill="none" stroke="#2b7ab8" stroke-width="1.5"/></svg>
<div class="ty" style="top:503px">Dateiordner</div>
<svg class="a" style="left:337px;top:525px" width="13" height="16" viewBox="0 0 13 16"><rect x="0.5" y="0.5" width="11" height="15" fill="url(#fg)" stroke="#DDBE63"/><rect x="10.5" y="9.5" width="2" height="6" fill="#F5D66E" stroke="#DDBE63"/></svg>
<svg class="a" style="left:594px;top:528px" width="13" height="10" viewBox="0 0 13 10"><path d="M3.2 9A2.4 2.4 0 0 1 2.6 4.2A3.5 3.5 0 0 1 9.2 3.2A2.8 2.8 0 0 1 9.8 9Z" fill="none" stroke="#2b7ab8" stroke-width="1.5"/></svg>
<div class="ty" style="top:524px">Dateiordner</div>
<svg class="a" style="left:337px;top:546px" width="13" height="16" viewBox="0 0 13 16"><rect x="0.5" y="0.5" width="11" height="15" fill="url(#fg)" stroke="#DDBE63"/><rect x="10.5" y="9.5" width="2" height="6" fill="#F5D66E" stroke="#DDBE63"/></svg>
<svg class="a" style="left:594px;top:549px" width="13" height="10" viewBox="0 0 13 10"><path d="M3.2 9A2.4 2.4 0 0 1 2.6 4.2A3.5 3.5 0 0 1 9.2 3.2A2.8 2.8 0 0 1 9.8 9Z" fill="none" stroke="#2b7ab8" stroke-width="1.5"/></svg>
<div class="ty" style="top:545px">Dateiordner</div>
<svg class="a" style="left:337px;top:567px" width="13" height="16" viewBox="0 0 13 16"><rect x="0.5" y="0.5" width="11" height="15" fill="url(#fg)" stroke="#DDBE63"/><rect x="10.5" y="9.5" width="2" height="6" fill="#F5D66E" stroke="#DDBE63"/></svg>
<svg class="a" style="left:594px;top:570px" width="13" height="10" viewBox="0 0 13 10"><path d="M3.2 9A2.4 2.4 0 0 1 2.6 4.2A3.5 3.5 0 0 1 9.2 3.2A2.8 2.8 0 0 1 9.8 9Z" fill="none" stroke="#2b7ab8" stroke-width="1.5"/></svg>
<div class="ty" style="top:566px">Dateiordner</div>
<svg class="a" style="left:337px;top:588px" width="13" height="16" viewBox="0 0 13 16"><rect x="0.5" y="0.5" width="11" height="15" fill="url(#fg)" stroke="#DDBE63"/><rect x="10.5" y="9.5" width="2" height="6" fill="#F5D66E" stroke="#DDBE63"/></svg>
<svg class="a" style="left:594px;top:591px" width="13" height="10" viewBox="0 0 13 10"><path d="M3.2 9A2.4 2.4 0 0 1 2.6 4.2A3.5 3.5 0 0 1 9.2 3.2A2.8 2.8 0 0 1 9.8 9Z" fill="none" stroke="#2b7ab8" stroke-width="1.5"/></svg>
<div class="ty" style="top:587px">Dateiordner</div>
<svg class="a" style="left:337px;top:609px" width="13" height="16" viewBox="0 0 13 16"><rect x="0.5" y="0.5" width="11" height="15" fill="url(#fg)" stroke="#DDBE63"/><rect x="10.5" y="9.5" width="2" height="6" fill="#F5D66E" stroke="#DDBE63"/></svg>
<svg class="a" style="left:594px;top:612px" width="13" height="10" viewBox="0 0 13 10"><path d="M3.2 9A2.4 2.4 0 0 1 2.6 4.2A3.5 3.5 0 0 1 9.2 3.2A2.8 2.8 0 0 1 9.8 9Z" fill="none" stroke="#2b7ab8" stroke-width="1.5"/></svg>
<div class="ty" style="top:608px">Dateiordner</div>
<svg class="a" style="left:337px;top:630px" width="13" height="16" viewBox="0 0 13 16"><rect x="0.5" y="0.5" width="11" height="15" fill="url(#fg)" stroke="#DDBE63"/><rect x="10.5" y="9.5" width="2" height="6" fill="#F5D66E" stroke="#DDBE63"/></svg>
<svg class="a" style="left:594px;top:633px" width="13" height="10" viewBox="0 0 13 10"><path d="M3.2 9A2.4 2.4 0 0 1 2.6 4.2A3.5 3.5 0 0 1 9.2 3.2A2.8 2.8 0 0 1 9.8 9Z" fill="none" stroke="#2b7ab8" stroke-width="1.5"/></svg>
<div class="d" style="top:629px">27.09.2018 18:16</div>
<div class="ty" style="top:629px">Dateiordner</div>
<svg class="a" style="left:337px;top:651px" width="13" height="16" viewBox="0 0 13 16"><rect x="0.5" y="0.5" width="11" height="15" fill="url(#fg)" stroke="#DDBE63"/><rect x="10.5" y="9.5" width="2" height="6" fill="#F5D66E" stroke="#DDBE63"/></svg>
<svg class="a" style="left:594px;top:654px" width="13" height="10" viewBox="0 0 13 10"><path d="M3.2 9A2.4 2.4 0 0 1 2.6 4.2A3.5 3.5 0 0 1 9.2 3.2A2.8 2.8 0 0 1 9.8 9Z" fill="none" stroke="#2b7ab8" stroke-width="1.5"/></svg>
<div class="d" style="top:650px">31.07.2023 17:36</div>
<div class="ty" style="top:650px">Dateiordner</div>
<svg class="a" style="left:337px;top:672px" width="13" height="16" viewBox="0 0 13 16"><rect x="0.5" y="0.5" width="11" height="15" fill="url(#fg)" stroke="#DDBE63"/><rect x="10.5" y="9.5" width="2" height="6" fill="#F5D66E" stroke="#DDBE63"/></svg>
<svg class="a" style="left:594px;top:675px" width="13" height="10" viewBox="0 0 13 10"><path d="M3.2 9A2.4 2.4 0 0 1 2.6 4.2A3.5 3.5 0 0 1 9.2 3.2A2.8 2.8 0 0 1 9.8 9Z" fill="none" stroke="#2b7ab8" stroke-width="1.5"/></svg>
<div class="d" style="top:671px">31.03.2022 23:08</div>
<div class="ty" style="top:671px">Dateiordner</div>
<svg class="a" style="left:337px;top:693px" width="13" height="16" viewBox="0 0 13 16"><rect x="0.5" y="0.5" width="11" height="15" fill="url(#fg)" stroke="#DDBE63"/><rect x="10.5" y="9.5" width="2" height="6" fill="#F5D66E" stroke="#DDBE63"/></svg>
<svg class="a" style="left:594px;top:696px" width="13" height="10" viewBox="0 0 13 10"><path d="M3.2 9A2.4 2.4 0 0 1 2.6 4.2A3.5 3.5 0 0 1 9.2 3.2A2.8 2.8 0 0 1 9.8 9Z" fill="none" stroke="#2b7ab8" stroke-width="1.5"/></svg>
<div class="d" style="top:692px">06.12.2016 12:30</div>
<div class="ty" style="top:692px">Dateiordner</div>
<svg class="a" style="left:337px;top:714px" width="13" height="16" viewBox="0 0 13 16"><rect x="0.5" y="0.5" width="11" height="15" fill="url(#fg)" stroke="#DDBE63"/><rect x="10.5" y="9.5" width="2" height="6" fill="#F5D66E" stroke="#DDBE63"/></svg>
<svg class="a" style="left:594px;top:717px" width="13" height="10" viewBox="0 0 13 10"><path d="M3.2 9A2.4 2.4 0 0 1 2.6 4.2A3.5 3.5 0 0 1 9.2 3.2A2.8 2.8 0 0 1 9.8 9Z" fill="none" stroke="#2b7ab8" stroke-width="1.5"/></svg>
<div class="d" style="top:713px">16.06.2020 11:56</div>
<div class="ty" style="top:713px">Dateiordner</div>
<svg class="a" style="left:337px;top:735px" width="13" height="16" viewBox="0 0 13 16"><rect x="0.5" y="0.5" width="11" height="15" fill="url(#fg)" stroke="#DDBE63"/><rect x="10.5" y="9.5" width="2" height="6" fill="#F5D66E" stroke="#DDBE63"/></svg>
<svg class="a" style="left:594px;top:738px" width="13" height="10" viewBox="0 0 13 10"><path d="M3.2 9A2.4 2.4 0 0 1 2.6 4.2A3.5 3.5 0 0 1 9.2 3.2A2.8 2.8 0 0 1 9.8 9Z" fill="none" stroke="#2b7ab8" stroke-width="1.5"/></svg>
<div class="d" style="top:734px">04.08.2023 15:53</div>
<div class="ty" style="top:734px">Dateiordner</div>
<svg class="a" style="left:337px;top:756px" width="13" height="16" viewBox="0 0 13 16"><rect x="0.5" y="0.5" width="11" height="15" fill="url(#fg)" stroke="#DDBE63"/><rect x="10.5" y="9.5" width="2" height="6" fill="#F5D66E" stroke="#DDBE63"/></svg>
<svg class="a" style="left:594px;top:759px" width="13" height="10" viewBox="0 0 13 10"><path d="M3.2 9A2.4 2.4 0 0 1 2.6 4.2A3.5 3.5 0 0 1 9.2 3.2A2.8 2.8 0 0 1 9.8 9Z" fill="none" stroke="#2b7ab8" stroke-width="1.5"/></svg>
<div class="d" style="top:755px">21.01.2024 18:03</div>
<div class="ty" style="top:755px">Dateiordner</div>
<svg class="a" style="left:337px;top:777px" width="13" height="16" viewBox="0 0 13 16"><rect x="0.5" y="0.5" width="11" height="15" fill="url(#fg)" stroke="#DDBE63"/><rect x="10.5" y="9.5" width="2" height="6" fill="#F5D66E" stroke="#DDBE63"/></svg>
<svg class="a" style="left:594px;top:780px" width="13" height="10" viewBox="0 0 13 10"><path d="M3.2 9A2.4 2.4 0 0 1 2.6 4.2A3.5 3.5 0 0 1 9.2 3.2A2.8 2.8 0 0 1 9.8 9Z" fill="none" stroke="#2b7ab8" stroke-width="1.5"/></svg>
<div class="d" style="top:776px">11.09.2020 16:41</div>
<div class="ty" style="top:776px">Dateiordner</div>
<div class="a" style="left:352px;top:145px;width:73px;height:22px;background:#fff;border-radius:10px"></div>
<div class="a" style="left:1100px;top:93px;width:15px;height:706px;background:#f0f0f0"></div>
<div class="a" style="left:1100px;top:110px;width:15px;height:177px;background:#cdcdcd"></div>
<svg class="a" style="left:1103px;top:99px" width="9" height="7" viewBox="0 0 9 7"><path d="M1.2 5.6L4.5 2.2L7.8 5.6" fill="none" stroke="#555" stroke-width="2"/></svg>
<svg class="a" style="left:1103px;top:788px" width="9" height="7" viewBox="0 0 9 7"><path d="M1.2 1.4L4.5 4.8L7.8 1.4" fill="none" stroke="#555" stroke-width="2"/></svg>
<div class="a" style="left:0;top:799px;width:1115px;height:24px;background:#fff"></div>
<div class="t" style="left:13px;top:801px;color:#3c4a5c;letter-spacing:-0.45px">122 Elemente</div>
<div class="a" style="left:93px;top:804px;width:1px;height:14px;background:#f0f0f0"></div>
<div class="t" style="left:104px;top:801px;color:#3c4a5c">1 Element ausgewählt</div>
<div class="a" style="left:229px;top:804px;width:1px;height:14px;background:#e5e5e5"></div>
<div class="t" style="left:240px;top:801px;color:#3c4a5c;letter-spacing:0">Verfügbar, wenn online</div>
<div class="a" style="left:373px;top:804px;width:1px;height:14px;background:#e5e5e5"></div>
<div class="a" style="left:1068px;top:799px;width:22px;height:23px;background:#cce8ff;border:1px solid #4a96c0"></div>
<svg class="a" style="left:1071px;top:803px" width="16" height="15" viewBox="0 0 16 15"><rect x="1.5" y="1.5" width="4" height="12" fill="#fff" stroke="#8a8a8a"/><path d="M1.5 5.5H5.5M1.5 9.5H5.5" stroke="#8a8a8a"/><rect x="3" y="3" width="1" height="1" fill="#333"/><rect x="3" y="7" width="1" height="1" fill="#333"/><rect x="3" y="11" width="1" height="1" fill="#333"/><path d="M7 3.5H10M12 3.5H15M7 7.5H10M12 7.5H15M7 11.5H10M12 11.5H15" stroke="#555" stroke-width="1"/></svg>
<svg class="a" style="left:1094px;top:804px" width="14" height="11" viewBox="0 0 14 11"><rect x="0.5" y="0.5" width="13" height="10" fill="#fff" stroke="#8a8a8a"/><defs><linearGradient id="pv" x1="0" y1="0" x2="0" y2="1"><stop offset="0" stop-color="#4a86c0"/><stop offset="1" stop-color="#cfe0ea"/></linearGradient></defs><rect x="2" y="2" width="10" height="7" fill="url(#pv)"/><path d="M2 5.5C4 4.5 6 6 8 7C10 8 11 7.5 12 7V9H2Z" fill="#264c4a"/></svg>
<div class="a" style="left:0;top:823px;width:1115px;height:1px;background:#aba7a3"></div>
<div class="a" style="left:434px;top:159px;width:337px;height:466px;background:#8e8e8e;border-radius:0 0 2px 0"></div>
<div class="a" style="left:431px;top:153px;width:338px;height:470px;background:#eeeeee;border:1px solid #a0a0a0;border-right-color:#8c8c8c;border-bottom-color:#8c8c8c"></div>
<div class="mi" style="top:158px;font-weight:bold;">Öffnen</div>
<div class="mi" style="top:180px;">In neuem Fenster öffnen</div>
<div class="mi" style="top:202px;">An Schnellzugriff anheften</div>
<svg class="a" style="left:442px;top:227px" width="16" height="16" viewBox="0 0 16 16"><path d="M11 0.3L15.7 2.3V13.7L11 15.7Z" fill="#25a0ee"/><path d="M11.8 1.2L1.2 10.6M11.8 14.8L1.2 5.4" stroke="#0c70bc" stroke-width="2.8" stroke-linecap="round"/><path d="M11 0.3L15.7 2.3V13.7L11 15.7Z" fill="#2aa6f2"/></svg>
<div class="mi" style="top:224px;">Mit Code öffnen</div>
<div class="sep" style="left:442px;width:316px;top:249px"></div>
<div class="mi" style="top:253px;">Zugriff gewähren auf</div>
<svg class="a" style="left:749px;top:257px" width="8" height="14" viewBox="0 0 8 14"><path d="M1 1L6.5 7.0L1 13" fill="none" stroke="#555" stroke-width="1.1"/></svg>
<div class="mi" style="top:275px;">Vorgängerversionen wiederherstellen</div>
<div class="sep" style="left:442px;width:316px;top:300px"></div>
<svg class="a" style="left:443px;top:307px" width="13" height="15" viewBox="0 0 13 15"><path d="M6.5 0.6L12.4 2.2V7.5C12.4 11 10 13.4 6.5 14.4C3 13.4 0.6 11 0.6 7.5V2.2Z" fill="#2674b6" stroke="#86c2ea" stroke-width="1.1"/><path d="M2.2 11.6L11.6 2.6" stroke="#c8e8fb" stroke-width="1.9"/></svg>
<div class="mi" style="top:304px;">Prüfe mit PC-Spezialist Hannover Antivirus</div>
<div class="a" style="left:432px;top:326px;width:336px;height:22px;background:#fff"></div>
<svg class="a" style="left:443px;top:330px" width="14" height="14" viewBox="0 0 14 14"><rect x="0" y="0" width="14" height="13.5" fill="#f7fbfd"/><path d="M0.5 13.3H10" stroke="#c9c9c9" stroke-width="1"/><path d="M3 3.2H6A3.1 3.3 0 0 1 6 9.8H3Z" fill="none" stroke="#22b3c6" stroke-width="2.3"/><path d="M3 6.5V9.8H6A3.1 3.3 0 0 0 9 7" fill="none" stroke="#1a5a98" stroke-width="2.3"/><path d="M12.5 1.5V12.5" stroke="#173f6b" stroke-width="2"/></svg>
<div class="mi" style="top:326px;">Synology Drive</div>
<svg class="a" style="left:749px;top:330px" width="8" height="14" viewBox="0 0 8 14"><path d="M1 1L6.5 7.0L1 13" fill="none" stroke="#555" stroke-width="1.1"/></svg>
<div class="mi" style="top:348px;">In Bibliothek aufnehmen</div>
<svg class="a" style="left:749px;top:352px" width="8" height="14" viewBox="0 0 8 14"><path d="M1 1L6.5 7.0L1 13" fill="none" stroke="#555" stroke-width="1.1"/></svg>
<div class="mi" style="top:370px;">An "Start" anheften</div>
<svg class="a" style="left:444px;top:395px" width="12" height="16" viewBox="0 0 12 16"><path d="M2.8 6.5V4.2A3.2 3.2 0 0 1 9.2 3.6" fill="none" stroke="#e6a43a" stroke-width="1.6"/><rect x="0" y="6" width="12" height="10" fill="#858585"/><circle cx="6" cy="10.8" r="2.1" fill="#d0d0d0"/></svg>
<div class="mi" style="top:392px;">Mit File Locksmith entsperren</div>
<svg class="a" style="left:443px;top:418px" width="14" height="14" viewBox="0 0 14 14"><rect x="0" y="4" width="13" height="6" fill="#1c70c2"/><rect x="0" y="4" width="13" height="2" fill="#2a86d6"/><path d="M9.5 1V13M7 0.8H12M7 13.2H12" stroke="#5ab9ee" stroke-width="1.4"/></svg>
<div class="mi" style="top:414px;">Umbenennen mit PowerRename</div>
<div class="sep" style="left:442px;width:316px;top:439px"></div>
<div class="mi" style="top:443px;">Senden an</div>
<svg class="a" style="left:749px;top:447px" width="8" height="14" viewBox="0 0 8 14"><path d="M1 1L6.5 7.0L1 13" fill="none" stroke="#555" stroke-width="1.1"/></svg>
<div class="sep" style="left:442px;width:316px;top:468px"></div>
<div class="mi" style="top:472px;">Ausschneiden</div>
<div class="mi" style="top:494px;">Kopieren</div>
<div class="sep" style="left:442px;width:316px;top:519px"></div>
<div class="mi" style="top:523px;">Verknüpfung erstellen</div>
<div class="mi" style="top:545px;">Löschen</div>
<div class="mi" style="top:567px;">Umbenennen</div>
<div class="sep" style="left:442px;width:316px;top:592px"></div>
<div class="mi" style="top:596px;">Eigenschaften</div>
<div class="a" style="left:355px;top:271px;width:4px;height:20px;overflow:hidden;line-height:20px;color:#222">E</div>
<div class="a" style="left:355px;top:398px;width:4px;height:20px;overflow:hidden;line-height:20px;color:#222">L</div>
<div class="a" style="left:355px;top:565px;width:4px;height:20px;overflow:hidden;line-height:20px;color:#222">L</div>
<div class="a" style="left:355px;top:586px;width:4px;height:20px;overflow:hidden;line-height:20px;color:#222">E</div>
<div class="a" style="left:355px;top:607px;width:4px;height:20px;overflow:hidden;line-height:20px;color:#222">E</div>
<div class="a" style="left:355px;top:211px;width:4px;height:20px;overflow:hidden;line-height:20px;color:#e4e4e4">/</div>
<div class="a" style="left:427px;top:146px;width:4px;height:20px;overflow:hidden;line-height:20px;color:#111">E</div>
<div class="a" style="left:426px;top:167px;width:4px;height:20px;overflow:hidden;line-height:20px;color:#333">g</div>
<div class="a" style="left:427px;top:230px;width:4px;height:20px;overflow:hidden;line-height:20px;color:#333">e</div>
<div class="a" style="left:427px;top:272px;width:4px;height:20px;overflow:hidden;line-height:20px;color:#444">r</div>
<div class="a" style="left:427px;top:335px;width:4px;height:20px;overflow:hidden;line-height:20px;color:#bbb">n</div>
<div class="a" style="left:427px;top:376px;width:4px;height:20px;overflow:hidden;line-height:20px;color:#aaa">a</div>
<div class="a" style="left:427px;top:504px;width:4px;height:20px;overflow:hidden;line-height:20px;color:#444">a</div>
<div class="a" style="left:355px;top:232px;width:4px;height:20px;overflow:hidden;line-height:20px;color:#d0d0d0">/</div>
<div class="a" style="left:355px;top:253px;width:4px;height:20px;overflow:hidden;line-height:20px;color:#d0d0d0">/</div>
<div class="a" style="left:355px;top:418px;width:4px;height:20px;overflow:hidden;line-height:20px;color:#bbb">I</div>
<div class="a" style="left:431px;top:428px;width:3px;height:77px;background:#fff"></div>
<div class="a" style="left:763px;top:323px;width:335px;height:106px;background:#eeeeee;border:1px solid #a0a0a0;border-right:2px solid #8c8c8c;border-bottom:2px solid #8c8c8c"></div>
<div class="a" style="left:765px;top:328px;width:330px;height:22px;background:#fff"></div>
<div class="mi" style="left:798px;top:328px;letter-spacing:-0.15px">Link erhalten</div>
<div class="mi" style="left:798px;top:350px;letter-spacing:-0.15px">Synchronisierung dieses Ordners anhalten</div>
<div class="mi" style="left:798px;top:379px;letter-spacing:-0.15px">Lokale Kopie dauerhaft anheften</div>
<div class="mi" style="left:798px;top:401px;letter-spacing:-0.15px">Speicherplatz freigeben</div>
<div class="sep" style="left:774px;width:312px;top:375px"></div>
</body></html>
